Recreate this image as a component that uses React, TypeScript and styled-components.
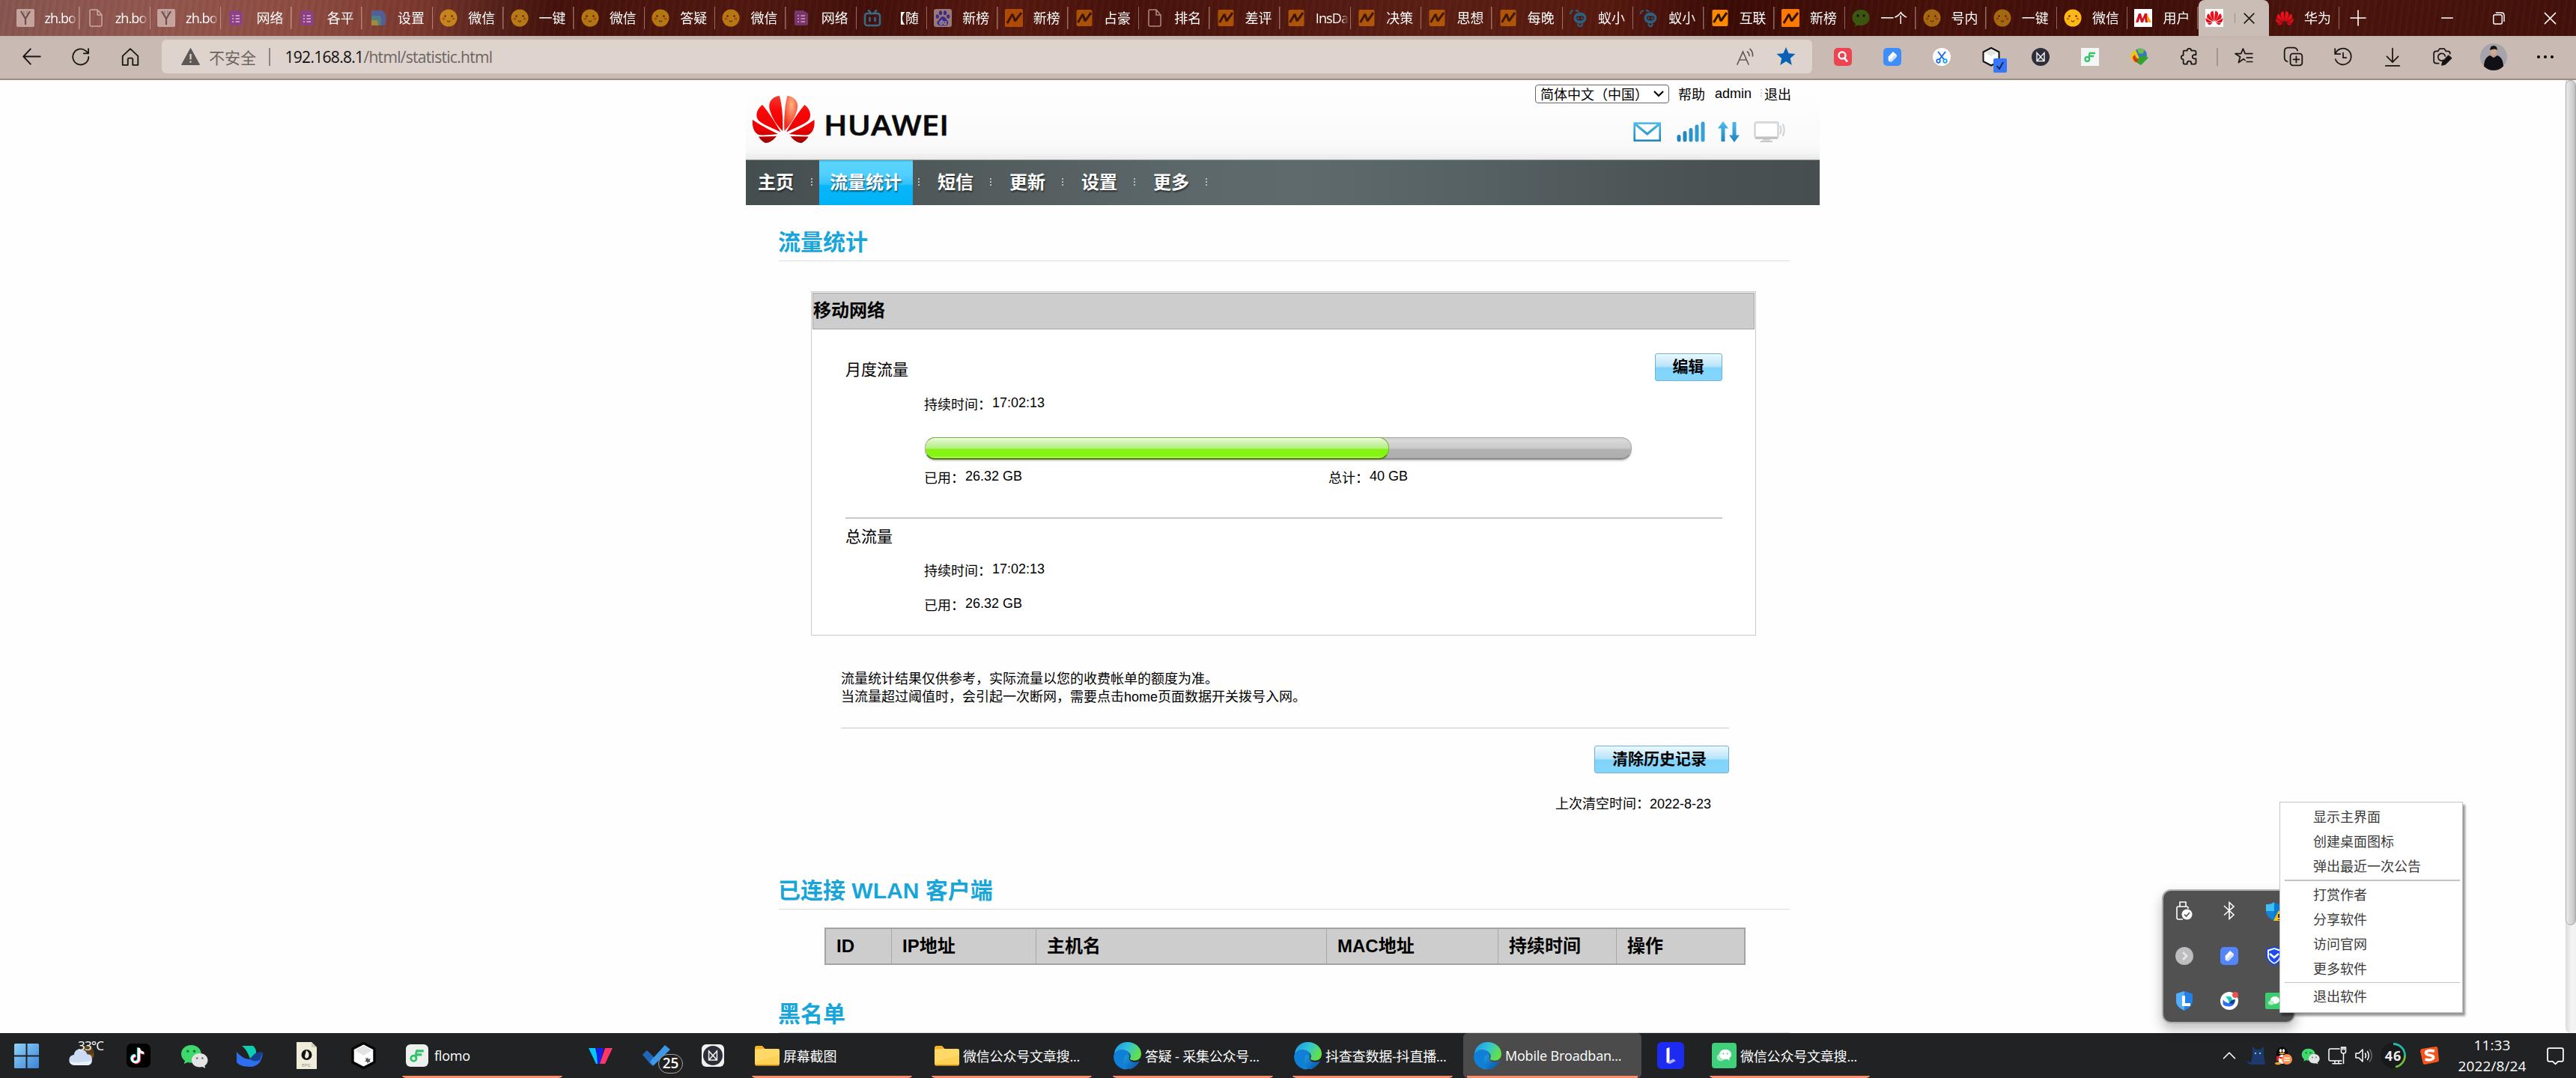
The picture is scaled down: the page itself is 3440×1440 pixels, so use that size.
import React from "react";
import styled, { createGlobalStyle, css } from "styled-components";

const uiFont = `"Open Sans", "Noto Sans CJK SC", sans-serif`;
const pageFont = `"Liberation Sans", "Noto Sans CJK SC", sans-serif`;

const GlobalStyle = createGlobalStyle`
  *, *::before, *::after { box-sizing: border-box; }
  body { margin: 0; background: #fff; overflow: hidden; font-family: ${pageFont}; }
  svg { display: block; flex: none; overflow: visible; }
`;

const Screen = styled.div`
  width: 3440px;
  height: 1440px;
  display: flex;
  flex-direction: column;
  overflow: hidden;
  position: relative;
`;

/* ---------- browser chrome ---------- */

const TabStrip = styled.div`
  height: 48px;
  flex: none;
  display: flex;
  padding-left: 12.5px;
  font: 18px ${uiFont};
  color: #fff;
  background:
    repeating-linear-gradient(98deg, rgba(255, 255, 255, 0.02) 0 2px, rgba(0, 0, 0, 0.035) 3px 6px, transparent 7px 9px),
    linear-gradient(90deg, #885650 0, #93574e 220px, #8e4c42 400px, #7b382e 560px, #56221a 660px, #45120b 740px, #50180f 1000px, #43100a 1160px, #57190f 1350px, #47120b 1500px, #5b1e14 1900px, #56190f 2150px, #3b0b06 2300px, #47110a 2600px, #3f0e08 2850px, #4b140c 3100px, #43110a 3440px);
`;

const TabItem = styled.div<{ $active?: boolean }>`
  width: 94.3px;
  flex: none;
  display: flex;
  align-items: center;
  padding-left: 9px;
  ${(p) =>
    p.$active
      ? css`
          background: #cabdb6;
          border-radius: 8px 8px 0 0;
        `
      : css`
          background: linear-gradient(rgba(255, 225, 215, 0.42), rgba(255, 225, 215, 0.42)) right center / 1.5px 30px no-repeat;
        `}
`;

const TabLabel = styled.span<{ $tight: boolean }>`
  width: 45px;
  margin-left: 14px;
  line-height: 26px;
  overflow: hidden;
  white-space: nowrap;
  letter-spacing: ${(p) => (p.$tight ? -0.9 : 0)}px;
  mask-image: linear-gradient(90deg, #000 72%, transparent 98%);
`;

const Dim = styled.span<{ $o: number }>`
  opacity: ${(p) => p.$o};
`;

const TabDivider = styled.span`
  width: 1px;
  height: 13px;
  margin: 0 9px 0 15px;
  background: #9d908a;
`;

const Slot = styled.div<{ $w: number }>`
  width: ${(p) => p.$w}px;
  flex: none;
  display: flex;
  align-items: center;
  justify-content: center;
`;

const WindowControls = styled.div`
  display: flex;
  margin-left: auto;
`;

const Toolbar = styled.div`
  height: 59px;
  flex: none;
  display: flex;
  align-items: center;
  padding: 0 8px 2px 9px;
  background: linear-gradient(#c5b7af 0, #c9bbb3 8px, #c9bbb3 54px, #c5b7af 57px);
  border-bottom: 2px solid #9b8f87;
`;

const AddressBar = styled.div`
  width: 2204px;
  height: 45px;
  margin: 0 8px 0 9px;
  flex: none;
  display: flex;
  align-items: center;
  padding-left: 26px;
  border-radius: 6px;
  background: #ded3cd;
  font: 21px ${uiFont};
  color: #6c6662;
`;

const Insecure = styled.span`
  width: 64px;
  margin-left: 12px;
  white-space: nowrap;
`;

const AddressDivider = styled.span`
  width: 1.5px;
  height: 24px;
  margin: 0 20px 0 16px;
  background: #8b827d;
`;

const Url = styled.span`
  letter-spacing: -0.7px;
  b { font-weight: 400; color: #111; }
`;

const AddressActions = styled.div`
  display: flex;
  margin: 0 9px 0 auto;
`;

const ToolDivider = styled.i`
  width: 1.5px;
  height: 24px;
  margin: 0 2px 0 4px;
  background: #a3958d;
`;

/* ---------- router page ---------- */

const Viewport = styled.main`
  height: 1273px;
  flex: none;
  display: flex;
  background: #fefefe;
`;

const Scroller = styled.div`
  flex: 1;
  display: flex;
  justify-content: center;
  overflow: hidden;
`;

const ScrollTrack = styled.div`
  width: 14px;
  background: linear-gradient(90deg, #dcdcdc, #f5f5f5 60%, #f0f0f0);
  border-radius: 0 0 7px 7px;
`;

const ScrollThumb = styled.div`
  height: 1129px;
  border-radius: 7px;
  border: 1px solid #a9a9a9;
  background: linear-gradient(90deg, #e9e9e9, #d0d0d0 70%, #bdbdbd);
`;

const PageColumn = styled.div`
  width: 1434px;
  flex: none;
  color: #000;
`;

const Banner = styled.header`
  height: 107px;
  display: flex;
  justify-content: space-between;
  background: linear-gradient(#fff, #fafafa 80%, #f7f7f7 90%, #e9e9e9);
  border-bottom: 1px solid #9fa5a5;
`;

const Brand = styled.div`
  padding: 21px 0 0 9px;
`;

const BannerSide = styled.div`
  width: 380px;
`;

const AccountRow = styled.div`
  height: 24px;
  margin-top: 6px;
  display: flex;
  align-items: center;
  font-size: 18px;
  white-space: nowrap;
`;

const LanguageSelect = styled.div`
  width: 179px;
  height: 25px;
  display: flex;
  align-items: center;
  justify-content: space-between;
  padding: 0 6px 0 6px;
  border: 1px solid #666;
  border-radius: 4px;
  background: #fff;
  margin-right: 12px;
`;

const AccountLink = styled.span<{ $gap: number }>`
  margin-right: ${(p) => p.$gap}px;
`;

const DottedMark = styled.i<{ $color: string; $gap?: number }>`
  width: 2px;
  height: 12px;
  flex: none;
  margin-right: ${(p) => p.$gap ?? 0}px;
  background: repeating-linear-gradient(${(p) => p.$color} 0 2px, transparent 2px 4px);
`;

const StatusRow = styled.div`
  display: flex;
  align-items: center;
  gap: 18.5px;
  margin: 25px 0 0 131px;
  height: 28px;
`;

const NavBar = styled.nav`
  height: 60px;
  display: flex;
  align-items: center;
  background: linear-gradient(90deg, #454e4f, #4d5657 12%, #5d686a 42%, #5e6a6c 52%, #566163 68%, #4a5253 88%, #464e50);
`;

const NavItem = styled.a<{ $active?: boolean; $first?: boolean }>`
  height: 60px;
  padding: ${(p) => (p.$active ? "0 15px 0 14px" : p.$first ? "0 23px 0 16px" : "0 22px 0 24px")};
  margin-left: ${(p) => (p.$active ? 9 : 0)}px;
  margin-right: ${(p) => (p.$active ? 7 : 0)}px;
  font: bold 24px/60px ${pageFont};
  color: #fff;
  text-shadow: 1px 2px 2px rgba(0, 0, 0, 0.55);
  ${(p) =>
    p.$active &&
    css`
      background: linear-gradient(#3fb4dd 0, #5bd5ff 3px, #50cfff 20px, #31c2fb 32px, #08b7fa 34px, #00b2f3);
    `}
`;

const SectionTitle = styled.h2<{ $top: number }>`
  height: 75px;
  margin: ${(p) => p.$top}px 40px 0 44px;
  padding-top: 30px;
  border-bottom: 1px solid #dcdcdc;
  font: bold 30px/40px ${pageFont};
  text-indent: -1px;
  color: #17a5da;
`;

const Panel = styled.section`
  width: 1262px;
  height: 460px;
  margin: 40px 0 0 87px;
  padding: 1px;
  border: 1px solid #c9c9c9;
  background: #fff;
`;

const PanelHead = styled.div`
  height: 49px;
  border: 1px solid #a3a3a3;
  background: #cdcdcd;
  font: bold 24px/46px ${pageFont};
`;

const PanelBody = styled.div`
  padding: 32px 43px 0 44px;
`;

const PanelRow = styled.div`
  display: flex;
  justify-content: space-between;
  height: 38px;
`;

const GroupName = styled.div<{ $top: number }>`
  margin-top: ${(p) => p.$top}px;
  font-size: 21px;
  line-height: 28px;
`;

const GlossButton = styled.button<{ $w: number; $shift?: number }>`
  width: ${(p) => p.$w}px;
  height: 37px;
  padding: 0 ${(p) => p.$shift ?? 1}px 2px 0;
  border: 1.5px solid #6fb0de;
  border-radius: 3px;
  background: linear-gradient(#eef9ff, #b5e2fb 48%, #7fd4fb 52%, #86d6fb);
  font: bold 21px/32px ${pageFont};
  color: #000;
`;

const Detail = styled.div<{ $top: number }>`
  height: 24px;
  margin: ${(p) => p.$top}px 0 0 105px;
  display: grid;
  grid-template-columns: 540px 1fr;
  font-size: 18px;
`;

const Field = styled.div`
  display: flex;
  align-items: flex-start;
  line-height: 24px;
  white-space: nowrap;
`;

const Value = styled.span`
  margin-left: 1px;
  line-height: 19px;
`;

const Meter = styled.div`
  width: 944px;
  height: 30px;
  margin: 31px 0 0 106px;
  border-radius: 14px;
  border: 1px solid #a8a8a8;
  border-bottom: 2px solid #8a8a8a;
  background: linear-gradient(#cfcfcf, #d9d9d9 12%, #c9c9c9 52%, #b3b3b3 56%, #adadad);
  box-shadow: 0 2px 2px rgba(0, 0, 0, 0.18);
`;

const MeterFill = styled.div`
  height: 30px;
  margin: -1px;
  border-radius: 14px;
  border: 1px solid #78b23e;
  border-left-color: #b9b9b9;
  border-bottom: 2px solid #4f7d13;
  background: linear-gradient(#f1fbe8 0, #d8f5bd 15%, #b2ef7f 51%, #86f215 56%, #83f510 88%, #b6f36d);
`;

const PanelRule = styled.div`
  height: 2px;
  margin-top: 40px;
  background: #c9c9c9;
`;

const Notes = styled.div`
  margin: 46px 121px 0 127px;
  padding-bottom: 29px;
  border-bottom: 1px solid #c9c9c9;
  font-size: 18px;
  line-height: 24px;
`;

const ClearArea = styled.div`
  margin: 23px 121px 0 0;
  display: flex;
  flex-direction: column;
  align-items: flex-end;
  font-size: 18px;
`;

const ClearTime = styled.div`
  margin: 30px 24px 0 0;
  height: 24px;
  line-height: 23px;
`;

const ClientTable = styled.div`
  width: 1230px;
  height: 50px;
  margin: 24px 0 0 105px;
  display: grid;
  grid-template-columns: 87px 193px 388px 229px 158px 1fr;
  border: 2px solid #a3a3a3;
  background: #cdcdcd;
  font: bold 24px/45px ${pageFont};
`;

const HeadCell = styled.div`
  padding-left: 14px;
  & + & { border-left: 1px solid #a8a8a8; padding-left: 14px; }
`;

/* ---------- tray flyout and context menu ---------- */

const TrayFlyout = styled.div`
  position: absolute;
  left: 2887px;
  top: 1188px;
  width: 178px;
  height: 179px;
  padding: 0 0 2px 2px;
  display: grid;
  grid-template-columns: repeat(3, 60px);
  grid-template-rows: repeat(3, 60px);
  align-content: center;
  justify-content: center;
  place-items: center;
  background: #515151;
  border: 2px solid #adadad;
  border-radius: 12px;
  box-shadow: 0 8px 16px rgba(0, 0, 0, 0.25);
`;

const ContextMenu = styled.div`
  position: absolute;
  left: 3044px;
  top: 1071px;
  width: 245px;
  height: 282px;
  padding: 2px 3px 0 6px;
  background: #fff;
  border: 1.5px solid #c4c4c4;
  box-shadow: 3px 4px 3px rgba(0, 0, 0, 0.42);
  font: 18px/33px "Noto Sans CJK SC", sans-serif;
  color: #3a3a3a;
`;

const MenuItem = styled.div`
  height: 33px;
  padding-left: 38px;
`;

const MenuRule = styled.div`
  height: 1.5px;
  margin: 2px 0 1px;
  background: #c2c2c2;
`;

/* ---------- taskbar ---------- */

const Taskbar = styled.footer`
  height: 60px;
  flex: none;
  display: flex;
  align-items: stretch;
  background: #212224;
  font: 18px ${uiFont};
  color: #fff;
  white-space: nowrap;
`;

const Pinned = styled.div<{ $w: number; $gap: number }>`
  width: ${(p) => p.$w}px;
  margin-left: ${(p) => p.$gap}px;
  flex: none;
  display: flex;
  align-items: center;
  position: relative;
`;

const Running = styled.div<{ $w: number; $gap: number; $active?: boolean; $pad?: number }>`
  width: ${(p) => p.$w}px;
  margin-left: ${(p) => p.$gap}px;
  padding-left: ${(p) => p.$pad ?? 5}px;
  flex: none;
  display: flex;
  align-items: center;
  gap: ${(p) => (p.$pad === 6 ? 8 : 5)}px;
  letter-spacing: -0.2px;
  border-radius: 6px;
  background:
    linear-gradient(#fb8b6b, #fb8b6b) center bottom / calc(100% - ${(p) => (p.$active ? 10 : 0)}px) 3px no-repeat,
    ${(p) => (p.$active ? "#4b4b4c" : "transparent")};
`;

const Temperature = styled.span`
  position: absolute;
  left: 12px;
  top: 5px;
  font-size: 17px;
  letter-spacing: -0.8px;
`;

const CountBadge = styled.span`
  position: absolute;
  left: 21px;
  top: 28px;
  width: 33px;
  height: 26px;
  border: 1.5px solid #a5a5a5;
  border-radius: 13px;
  background: #202020;
  font: 600 19px/22px ${uiFont};
  text-align: center;
`;

const Tray = styled.div`
  display: flex;
  margin-left: auto;
`;

const Clock = styled.div`
  width: 112px;
  padding-top: 2px;
  text-align: center;
  font-size: 19px;
  letter-spacing: 0.1px;
  line-height: 28px;
`;

/* ---------- drawings ---------- */

type IconProps = { s?: number; w?: number; c?: string };

const Line: React.FC<{ s?: number; c?: string; sw?: number; children: React.ReactNode }> = ({ s = 24, c = "#1b1715", sw = 1.6, children }) => (
  <svg width={s} height={s} viewBox="0 0 24 24" fill="none" stroke={c} strokeWidth={sw} strokeLinecap="round" strokeLinejoin="round">
    {children}
  </svg>
);

const halfPetals = [
  "M36 0C26 1 19 9 24 22C26.500 31 34 41 40 47C41 33 39.500 12 36 0Z",
  "M13 12C5 18 3 28 8.500 33.500C14 38.500 27 43 37.500 48.500C31 37 21 21 13 12Z",
  "M0 32C-1 43 3 50 8 52C14 53.200 24 52 34 51C25 46.500 12 40.500 0 32Z",
  "M8 54.500L32 54C27 60 22 63 17 63C13 61 10 58 8 54.500Z",
];

const HuaweiFlower: React.FC<{ w: number; h?: number; id: string; flat?: boolean }> = ({ w, h, id, flat }) => (
  <svg width={w} height={h ?? (w * 64) / 83} viewBox="0 0 83 64" preserveAspectRatio="none">
    <defs>
      <linearGradient id={id} x1="0" y1="0" x2="0" y2="64" gradientUnits="userSpaceOnUse">
        <stop offset="0" stopColor={flat ? "#ef1620" : "#f33b33"} />
        <stop offset=".3" stopColor={flat ? "#e8101c" : "#fa0808"} />
        <stop offset=".7" stopColor={flat ? "#e00c18" : "#ee0000"} />
        <stop offset="1" stopColor={flat ? "#d60814" : "#8e0000"} />
      </linearGradient>
      <radialGradient id={id + "h"} cx=".45" cy=".25" r=".7">
        <stop offset="0" stopColor="#ffb482" />
        <stop offset="1" stopColor="#f52a1d" />
      </radialGradient>
    </defs>
    {halfPetals.map((d) => (
      <path key={d} d={d} fill={`url(#${id})`} />
    ))}
    <g transform="translate(82.5 0) scale(-1 1)">
      {halfPetals.map((d, i) => (
        <path key={d} d={d} fill={i === 0 && !flat ? `url(#${id}h)` : `url(#${id})`} />
      ))}
    </g>
  </svg>
);

const HuaweiLogo = () => (
  <svg width="262" height="64" viewBox="0 0 262 64">
    <HuaweiFlower w={83} h={64} id="brand" />
    <text x="95" y="52.500" fontFamily="Open Sans, sans-serif" fontWeight="600" fontSize="38.500" textLength="167" lengthAdjust="spacingAndGlyphs" fill="#0a0a0a" stroke="#0a0a0a" strokeWidth=".6">
      HUAWEI
    </text>
  </svg>
);

const WeChat: React.FC<{ s: number }> = ({ s }) => (
  <svg width={s} height={s} viewBox="0 0 36 36">
    <path d="M14 4C6.500 4 1 9 1 15.500C1 19.200 3 22.300 5.800 24.300L4.600 28.500L9.300 26.200C10.800 26.700 12.400 26.900 14 26.900C21.400 26.900 27 22 27 15.500S21.400 4 14 4Z" fill="#3fd86d" />
    <path d="M25 14.500C18.900 14.500 14.500 18.500 14.500 23.500S18.900 32.500 25 32.500C26.300 32.500 27.500 32.300 28.600 32L32.300 34L31.400 30.600C33.900 29 35.500 26.400 35.500 23.500C35.500 18.500 31.100 14.500 25 14.500Z" fill="#e4e4e4" />
    <circle cx="9.500" cy="12" r="1.700" fill="#157a37" />
    <circle cx="18" cy="12" r="1.700" fill="#157a37" />
    <circle cx="21.500" cy="21" r="1.400" fill="#777" />
    <circle cx="28.500" cy="21" r="1.400" fill="#777" />
  </svg>
);

const Flomo: React.FC<{ s: number; bg: string; r?: number }> = ({ s, bg, r = 0 }) => (
  <svg width={s} height={s} viewBox="0 0 24 24">
    <rect width="24" height="24" rx={r} fill={bg} />
    <path d="M11 7H19M10 11H17" stroke="#31c36a" strokeWidth="2.600" />
    <path d="M12 6.500C10.500 8 10.800 10 10.800 14.500" stroke="#31c36a" strokeWidth="2.200" fill="none" />
    <circle cx="8.300" cy="15" r="2.900" fill="none" stroke="#31c36a" strokeWidth="2.200" />
  </svg>
);

const Feather: React.FC<IconProps & { bg?: string }> = ({ s = 24, bg = "#3d8dfb" }) => (
  <svg width={s} height={s} viewBox="0 0 24 24">
    <rect width="24" height="24" rx="5" fill={bg} />
    <path d="M7 18L6.500 12L13 5L18 9.500L17.500 12L11 18.500Z" fill="#fff" />
    <path d="M7 18L11 18.500L17.500 12L15 9Z" fill="#cfe0ff" />
  </svg>
);

const Bird: React.FC<{ s: number }> = ({ s }) => (
  <svg width={s} height={s} viewBox="0 0 36 36">
    <path d="M7 5H22C26 9 27 13 25 16L18 22C15 14 12 9 7 5Z" fill="#0cceb1" />
    <path d="M0 13C6 20 12 23 18 23C22 18 28 13 35 14C34 25 29 33 18 33C8 33 2 30 0 27Z" fill="#2e6ff2" />
    <path d="M18 23C22 16 28 12 35 14L31 24C27 26 22 26 18 23Z" fill="#14408f" />
  </svg>
);

const Hexagon: React.FC<{ w: number }> = ({ w }) => (
  <svg width={w} height={w * 1.09} viewBox="0 0 33 36">
    <path d="M16.500 1.500L31 9V27L16.500 34.500L2 27V9Z" fill="#fff" stroke="#050505" strokeWidth="3.400" strokeLinejoin="round" />
    <path d="M16.500 5L28 11L16.500 18L5 11Z" fill="#e3e3e3" />
    <path d="M22 20L23 23L26 22L24.500 25L26 27L23 26.500L22 29L21 26L18 26L20 24L19 21L21.500 22Z" fill="#555" />
  </svg>
);

const MyMind: React.FC<{ s: number }> = ({ s }) => (
  <svg width={s} height={s} viewBox="0 0 24 24">
    <circle cx="12" cy="12" r="12" fill="#2e2e39" />
    <path d="M7 17.500V6.500L12 12L17 6.500V17.500ZM7 17.500L12 12L17 17.500" fill="none" stroke="#f2f2f5" strokeWidth="1.400" />
  </svg>
);

const Folder = () => (
  <svg width="33" height="27" viewBox="0 0 33 27">
    <path d="M0 2.500Q0 0 2.500 0H10L13.500 4V8H0Z" fill="#f6b21c" />
    <rect y="4" width="33" height="22" rx="2" fill="#ffd968" />
    <path d="M0 22L33 12V24Q33 26 31 26H2Q0 26 0 24Z" fill="#fbcb48" opacity=".6" />
    <path d="M1 26H32" stroke="#d99a16" strokeWidth="1.500" />
  </svg>
);

const Edge: React.FC<{ id: string }> = ({ id }) => (
  <svg width="37" height="37" viewBox="0 0 36 36">
    <defs>
      <linearGradient id={id + "a"} x1="0" y1="0" x2="1" y2=".4">
        <stop offset="0" stopColor="#1f8fe0" />
        <stop offset=".5" stopColor="#2fc0dd" />
        <stop offset="1" stopColor="#62e04c" />
      </linearGradient>
      <linearGradient id={id + "b"} x1="0" y1="0" x2="1" y2="1">
        <stop offset="0" stopColor="#1b9de2" />
        <stop offset="1" stopColor="#0c50a6" />
      </linearGradient>
    </defs>
    <path d="M1 15C2 6 9 0 18 0C28 0 36 7 36 15C36 21 32 24 27 24C23 24 20.500 22.500 21.500 21C24 17 20 11 13 11C7 11 3 13 1 17Z" fill={`url(#${id}a)`} />
    <path d="M0 18C2 12 7 9 13 10C19 11 22 15 21 19C20 16 15 16 13.500 20C11 27 18 33 27 31C22 35 15 37 10 34C3 31 0 25 0 18Z" fill="#0f7fd8" />
    <path d="M13.500 20C15 16 19 15.500 21 19C19 21 21 25 26 26C30 26.500 32 25 34 24C32 29 28 33 22 35.500C14 34 11 27 13.500 20Z" fill={`url(#${id}b)`} />
  </svg>
);

const Shield: React.FC<{ kind: "defender" | "tencent" | "lenovo" }> = ({ kind }) => (
  <svg width="24" height="26" viewBox="0 0 24 26">
    {kind === "defender" && (
      <>
        <path d="M12 1C9 3.500 5 4 1 4V13H12Z" fill="#3cc0f5" />
        <path d="M12 13H1C1 19 6 23 12 26Z" fill="#1583d6" />
        <path d="M12 1C15 3.500 19 4 23 4V13C23 19 18 23 12 26Z" fill="#0c78cf" />
        <path d="M18 12L26 26H11Z" fill="#fdc111" />
        <path d="M18 17V22M18 24V25" stroke="#222" strokeWidth="1.800" />
      </>
    )}
    {kind === "tencent" && (
      <>
        <path d="M12 1L22 4V13C22 19 18 22 12 25C6 22 2 19 2 13V4Z" fill="#fff" stroke="#1c48dd" strokeWidth="2" />
        <path d="M12 4L19 6.500V13C19 17 16 20 12 22C8 20 5 17 5 13V6.500Z" fill="#1e4bf0" />
        <path d="M6 10L12 15L18 10" stroke="#fff" strokeWidth="2.600" fill="none" />
      </>
    )}
    {kind === "lenovo" && (
      <>
        <path d="M12 0L23 3.500V13C23 19 18 23 12 26C6 23 1 19 1 13V3.500Z" fill="#2280e8" />
        <path d="M12 0L1 3.500V13C1 19 6 23 12 26Z" fill="#55aef8" />
        <path d="M11 6V18H20" stroke="#fff" strokeWidth="4" fill="none" />
      </>
    )}
  </svg>
);

const tabIcons: Record<string, React.ReactNode> = {
  v: (
    <svg width="24" height="24" viewBox="0 0 24 24">
      <rect width="24" height="24" rx="2" fill="#d5b6b1" opacity=".8" />
      <path d="M6 3L12 13L18 3M12 12V21" stroke="#6d504c" strokeWidth="2.200" fill="none" />
      <path d="M10 2V8M14 2V8" stroke="#8d706b" />
    </svg>
  ),
  doc: (
    <svg width="24" height="24" viewBox="0 0 24 24" fill="none" stroke="#d9bfba" strokeWidth="1.500" strokeLinejoin="round" opacity=".8">
      <path d="M5 1H14L20 8V21Q20 23 18 23H6Q4 23 4 21V2ZM14 1V8H20" />
    </svg>
  ),
  form: (
    <svg width="24" height="24" viewBox="0 0 24 24">
      <path d="M4 2H14L20 6V19Q20 22 17 22H4Q2 22 2 20V4Q2 2 4 2Z" fill="#8b418f" opacity=".85" />
      <path d="M6 9H8M6 13H8M6 17H8M10.500 9H16M10.500 13H16M10.500 17H16" stroke="#c99bc6" strokeWidth="1.800" />
    </svg>
  ),
  multi: (
    <svg width="24" height="24" viewBox="0 0 24 24" opacity=".8">
      <path d="M3 2H17L22 7V18Q22 22 18 22H3Z" fill="#4a66ad" />
      <path d="M3 9H12Q16 9 16 13V22H3Z" fill="#3d9196" />
      <path d="M3 15H9Q12 15 12 18V22H3Z" fill="#ae9b3e" />
    </svg>
  ),
  face: (
    <svg width="24" height="24" viewBox="0 0 24 24">
      <circle cx="12" cy="12" r="11.500" fill="#fdb813" />
      <circle cx="7.500" cy="9.500" r="1.200" fill="#3b2508" />
      <circle cx="16.500" cy="9.500" r="1.200" fill="#3b2508" />
      <ellipse cx="5.500" cy="13" rx="2" ry="1.500" fill="#e8622c" />
      <ellipse cx="18.500" cy="13" rx="2" ry="1.500" fill="#e8622c" />
      <path d="M10 15.500Q12 18.500 14 15.500" stroke="#3b2508" strokeWidth="1.200" fill="none" />
    </svg>
  ),
  bili: (
    <svg width="24" height="24" viewBox="0 0 24 24" fill="none" stroke="#376a88" strokeWidth="2.600">
      <rect x="2" y="6" width="20" height="16" rx="3" />
      <path d="M7 2L10 6M17 2L14 6M8.500 12V16M15.500 12V16" strokeLinecap="round" />
    </svg>
  ),
  baidu: (
    <svg width="24" height="24" viewBox="0 0 24 24">
      <rect width="24" height="24" rx="3" fill="#9a7a78" />
      <g fill="#3d2a86">
        <ellipse cx="4.800" cy="10" rx="2.100" ry="2.800" />
        <ellipse cx="9" cy="5.200" rx="2.100" ry="2.900" />
        <ellipse cx="15" cy="5.200" rx="2.100" ry="2.900" />
        <ellipse cx="19.200" cy="10" rx="2.100" ry="2.800" />
        <path d="M12 10C9 10 8 14 5.500 16S5 22 8 22H16C19 22 20 18 18.500 16S15 10 12 10Z" />
      </g>
      <text x="7" y="20.500" fontSize="8" fontFamily="Open Sans, sans-serif" fontWeight="700" fill="#b79f9e">du</text>
    </svg>
  ),
  n: (
    <svg width="24" height="24" viewBox="0 0 24 24">
      <rect x="1.500" y="1" width="21" height="22" rx="2" fill="#ff8a00" />
      <path d="M3.500 18L10 7L13 16L21 5" fill="none" stroke="#2e1205" strokeWidth="3" strokeLinejoin="bevel" />
    </svg>
  ),
  nbig: (
    <svg width="24" height="24" viewBox="0 0 24 24">
      <rect width="24" height="24" rx="1.500" fill="#ff7800" />
      <path d="M3 19L10 7L13.500 16L22 5" fill="none" stroke="#2e1205" strokeWidth="3" strokeLinejoin="bevel" />
    </svg>
  ),
  ant: (
    <svg width="24" height="24" viewBox="0 0 24 24" fill="none" stroke="#2e5f80" strokeWidth="2">
      <path d="M1 7Q1 2 5 2.500M8 3Q10 .500 12 4" />
      <ellipse cx="14" cy="12" rx="8.500" ry="7.500" fill="#2e5f80" stroke="none" />
      <path d="M8.500 12Q9 8.500 14 9.500Q19 8.500 19.500 12Q18 15.500 14 15.500T8.500 12Z" fill="#4a1a15" stroke="none" />
      <circle cx="11.500" cy="12.300" r="1.200" fill="#2e5f80" stroke="none" />
      <circle cx="16.500" cy="12.300" r="1.200" fill="#2e5f80" stroke="none" />
      <path d="M11 19.500L12.500 23H15.500L17 19.500" />
    </svg>
  ),
  wx: (
    <svg width="24" height="24" viewBox="0 0 24 24">
      <path d="M12 1C5 1 .500 5.500 .500 11.500C.500 15 2 18 5 20L4 23.500L8.500 21.500Q10 22 12 22C19 22 23.500 17.500 23.500 11.500S19 1 12 1Z" fill="#3a5610" />
      <circle cx="8" cy="9" r="1.700" fill="#230d06" />
      <circle cx="16" cy="9" r="1.700" fill="#230d06" />
    </svg>
  ),
  m: (
    <svg width="24" height="24" viewBox="0 0 24 24">
      <rect width="24" height="24" fill="#fff" />
      <path d="M2 18L6 6H9L11 13L14 6H17L18 18H15L14 12L12 18H9L7.500 12L5.500 18Z" fill="#d3121f" />
      <path d="M17 6L23 18H19L17 13Z" fill="#f4a914" />
    </svg>
  ),
  hw: <HuaweiFlower w={24} h={19} id="tabflower" flat />,
  hwbox: (
    <svg width="24" height="24" viewBox="0 0 24 24">
      <rect width="24" height="24" fill="#fff" />
      <g transform="translate(.5 2.500)">
        <HuaweiFlower w={23} h={19} id="activeflower" flat />
      </g>
    </svg>
  ),
};

const tabs: [string, string, number][] = [
  ["v", "zh.bo", 1], ["doc", "zh.bo", 1], ["v", "zh.bo", 1], ["form", "网络", 1], ["form", "各平", 1], ["multi", "设置", 1],
  ["face", "微信", 0.62], ["face", "一键", 0.6], ["face", "微信", 0.6], ["face", "答疑", 0.6], ["face", "微信", 0.6],
  ["form", "网络", 0.85], ["bili", "【随", 1], ["baidu", "新榜", 1], ["nbig", "新榜", 0.52], ["n", "占豪", 0.52], ["doc", "排名", 0.85],
  ["n", "差评", 0.52], ["n", "InsDa", 0.52], ["n", "决策", 0.52], ["n", "思想", 0.52], ["n", "每晚", 0.52], ["ant", "蚁小", 1],
  ["ant", "蚁小", 1], ["n", "互联", 1], ["nbig", "新榜", 1], ["wx", "一个", 1], ["face", "号内", 0.52], ["face", "一键", 0.52],
  ["face", "微信", 1], ["m", "用户", 1], ["hwbox", "", 1], ["hw", "华为", 1],
];

const Chevron = ({ c = "#000", w = 14 }: IconProps) => (
  <svg width={w} height={w * 0.6} viewBox="0 0 14 8.400" fill="none" stroke={c} strokeWidth="2.200">
    <path d="M1 1L7 7L13 1" />
  </svg>
);

const ExtensionIcons = () => (
  <>
    <Slot $w={66}>
      <svg width="24" height="24" viewBox="0 0 24 24">
        <rect width="24" height="24" rx="5" fill="#ee4350" />
        <circle cx="11" cy="10" r="4.500" fill="none" stroke="#fff" strokeWidth="2.400" />
        <path d="M14 13.500L18 18.500" stroke="#fff" strokeWidth="2.800" />
      </svg>
    </Slot>
    <Slot $w={66}><Feather /></Slot>
    <Slot $w={66}>
      <svg width="24" height="24" viewBox="0 0 24 24">
        <circle cx="12" cy="12" r="12" fill="#fff" />
        <path d="M7 5L15.500 16M17 5L8.500 16" stroke="#1a6df0" strokeWidth="2" />
        <circle cx="7.500" cy="17.500" r="2.300" fill="none" stroke="#1a6df0" strokeWidth="1.700" />
        <circle cx="16.500" cy="17.500" r="2.300" fill="none" stroke="#16a1f0" strokeWidth="1.700" />
      </svg>
    </Slot>
    <Slot $w={66}>
      <svg width="26" height="26" viewBox="0 0 26 26">
        <path d="M13 1L23.500 6.500V19L13 24.500L2.500 19V6.500Z" fill="#fff" stroke="#111" strokeWidth="2" strokeLinejoin="round" />
        <path d="M13 3.500L21 7.500L13 12L5 7.500Z" fill="#e4e4e4" />
        <rect x="16" y="15" width="18" height="19" rx="2" fill="#3577f6" />
        <path d="M20.500 25L24 29L29 20" fill="none" stroke="#10204a" strokeWidth="1.800" />
      </svg>
    </Slot>
    <Slot $w={66}><MyMind s={24} /></Slot>
    <Slot $w={66}><Flomo s={24} bg="#f4f6f4" /></Slot>
    <Slot $w={66}>
      <svg width="26" height="24" viewBox="0 0 26 24">
        <circle cx="14" cy="9.500" r="9" fill="#3479c0" />
        <path d="M10 2Q15 -1 20 3L17 8L12 7Z" fill="#6ebf46" />
        <path d="M1 12Q2 4 8 3L13 14L9 20Q2 18 1 12Z" fill="#edc51b" />
        <path d="M4 12Q4 19 12 20L14 15Q8 15 7 9Z" fill="#d13a1d" />
        <path d="M12 13L19 10L25 13L15 23L10 20Z" fill="#2fa32b" />
      </svg>
    </Slot>
    <Slot $w={66}>
      <Line s={27}>
        <path d="M6 5H9.500A2.500 2.500 0 1 1 14.500 5H18Q20 5 20 7V10H18.500A2.300 2.300 0 1 0 18.500 14.500H20V19Q20 21 18 21H14.500V20A2.500 2.500 0 1 0 9.500 20V21H7Q5 21 5 19V15.500A2.500 2.500 0 1 1 5 10.500V7Q5 5 6 5Z" />
      </Line>
    </Slot>
  </>
);

const Browser = () => (
  <>
    <TabStrip>
      {tabs.map(([icon, label, o], i) => (
        <TabItem key={i} $active={icon === "hwbox"}>
          <Dim $o={o}>{tabIcons[icon]}</Dim>
          {label ? (
            <TabLabel $tight={label.length > 2}>{label}</TabLabel>
          ) : (
            <>
              <TabDivider />
              <Line s={19} sw={2}><path d="M4 4L20 20M20 4L4 20" /></Line>
            </>
          )}
        </TabItem>
      ))}
      <Slot $w={50}><Line s={24} c="#fff"><path d="M12 2V22M2 12H22" /></Line></Slot>
      <WindowControls>
        <Slot $w={69}><Line s={16} c="#fff" sw={2}><path d="M1 12H23" /></Line></Slot>
        <Slot $w={69}>
          <Line s={19} c="#fff" sw={1.8}>
            <rect x="3.500" y="6" width="14.500" height="15.500" rx="2.500" />
            <path d="M8 2.500H17Q21.500 2.500 21.500 7V17" />
          </Line>
        </Slot>
        <Slot $w={69}><Line s={19} c="#fff" sw={1.8}><path d="M3 3L21 21M21 3L3 21" /></Line></Slot>
      </WindowControls>
    </TabStrip>
    <Toolbar>
      <Slot $w={66}><Line s={27} sw={1.7}><path d="M22 12H2.500M10.500 3L2 12L10.500 21" /></Line></Slot>
      <Slot $w={66}><Line s={26} sw={1.7}><path d="M21.500 12A9.700 9.700 0 1 1 18 4.500L21 7.500M21.300 2V7.800H15.500" /></Line></Slot>
      <Slot $w={66}><Line s={26} sw={1.7}><path d="M2.500 11L12 2L21.500 11V22H15V15Q15 13.500 13.500 13.500H10.500Q9 13.500 9 15V22H2.500Z" /></Line></Slot>
      <AddressBar>
        <svg width="25" height="23" viewBox="0 0 25 23">
          <path d="M12.500 0.500L24.500 22.500H0.500Z" fill="#5d5855" stroke="#5d5855" strokeLinejoin="round" />
          <path d="M12.500 8V15.500M12.500 17.500V19.800" stroke="#ded3cd" strokeWidth="2.200" />
        </svg>
        <Insecure>不安全</Insecure>
        <AddressDivider />
        <Url><b>192.168.8.1</b>/html/statistic.html</Url>
        <AddressActions>
          <Slot $w={53}>
            <svg width="25" height="24" viewBox="0 0 25 24" fill="none" stroke="#625c58" strokeWidth="1.700" strokeLinecap="round">
              <path d="M1 22L8.500 5L16 22M3.700 16H13.300M14.500 5Q17 7 17 10.500M18 1.500Q22 5 21.500 11" />
            </svg>
          </Slot>
          <Slot $w={53}>
            <svg width="26" height="25" viewBox="0 0 24 23"><path d="M12 0L15.300 7.600L23.500 8.300L17.300 13.700L19.200 22L12 17.600L4.800 22L6.700 13.700L.500 8.300L8.700 7.600Z" fill="#0861b4" /></svg>
          </Slot>
        </AddressActions>
      </AddressBar>
      <ExtensionIcons />
      <ToolDivider />
      <Slot $w={66}><Line s={26}><path d="M13 16L11 14.500L5 19L7 12L1 8H8L10.500 2L13 8H22M15 13H22M15 18H22" /></Line></Slot>
      <Slot $w={66}><Line s={27}><rect x="8.500" y="8.500" width="14" height="14" rx="3" /><path d="M15.500 12V19M12 15.500H19M5 18Q1.500 17 1.500 13V6Q1.500 1.500 6 1.500H12Q16 1.500 17 5" /></Line></Slot>
      <Slot $w={66}><Line s={26}><path d="M2 2V8.500H8.500M2.500 8A10 10 0 1 1 2.500 15M12 7V13H16" /></Line></Slot>
      <Slot $w={66}><Line s={26}><path d="M12 1.500V18M5 11.500L12 18.500L19 11.500M3.500 23H20.500" /></Line></Slot>
      <Slot $w={66}>
        <Line s={26}>
          <path d="M8 20H5Q2 20 2 17V8Q2 5 5 5H7L9 2H15L17 5H19Q22 5 22 8M14 16A4.500 4.500 0 1 1 16 11" />
          <path d="M12 22L13 18L20 10.500L23.500 13.500L16 21Z" fill="#111" />
        </Line>
      </Slot>
      <Slot $w={72}>
        <svg width="36" height="36" viewBox="0 0 36 36">
          <clipPath id="avatar"><circle cx="18" cy="18" r="18" /></clipPath>
          <g clipPath="url(#avatar)">
            <rect width="36" height="36" fill="#a4a4aa" />
            <path d="M5 36Q4 19 13 16L18 19L23 16Q32 19 31 36Z" fill="#111115" />
            <path d="M15.500 13H20.500V17L18 19L15.500 17Z" fill="#c2967e" />
            <ellipse cx="18" cy="10.500" rx="4.200" ry="5.500" fill="#d2a78e" />
            <path d="M13.300 9Q13 3 18 3T22.700 9Q20 6 13.300 9Z" fill="#15110f" />
          </g>
        </svg>
      </Slot>
      <Slot $w={66}>
        <svg width="22" height="4" viewBox="0 0 22 4"><circle cx="2" cy="2" r="2" /><circle cx="11" cy="2" r="2" /><circle cx="20" cy="2" r="2" /></svg>
      </Slot>
    </Toolbar>
  </>
);

const StatusIcons = () => (
  <StatusRow>
    <svg width="38" height="28" viewBox="0 0 38 28">
      <defs>
        <linearGradient id="ink" x1="0" y1="0" x2="0" y2="28" gradientUnits="userSpaceOnUse">
          <stop offset="0" stopColor="#51bdec" />
          <stop offset="1" stopColor="#1e83bd" />
        </linearGradient>
      </defs>
      <rect x="1.700" y="2.700" width="34" height="23" fill="#fff" stroke="url(#ink)" strokeWidth="2.600" />
      <path d="M3 4L18.700 17L34.500 4" fill="none" stroke="url(#ink)" strokeWidth="3.200" />
    </svg>
    <svg width="38" height="28" viewBox="0 0 38 28" strokeWidth="5" strokeLinecap="round">
      {[20.5, 15.5, 11.5, 7, 3].map((y, i) => (
        <path key={y} d={`M${4 + i * 8} ${y}L${4.01 + i * 8} 25`} stroke={["#1f85bf", "#2387c0", "#2a91ca", "#309ad3", "#36a0d9"][i]} />
      ))}
    </svg>
    <svg width="29" height="28" viewBox="0 0 29 28">
      <path d="M7 0L14 9.500H9.500V27H4.500V9.500H0ZM22 28L15 18.500H19.500V1H24.500V18.500H29Z" fill="url(#ink)" />
    </svg>
    <svg width="44" height="28" viewBox="0 0 44 28">
      <rect x="1.500" y="1.500" width="31" height="20" rx="2" fill="#fff" stroke="#d7dadc" strokeWidth="2.800" />
      <path d="M2 22.500H32" stroke="#b9bbbd" strokeWidth="2.400" />
      <path d="M12 24.500H22M9 27H25" stroke="#c8c8c8" strokeWidth="2" />
      <path d="M35 6Q38 11 35 17M38.500 3.500Q43 11 38.500 20" fill="none" stroke="#d2d5d7" strokeWidth="2.200" />
    </svg>
  </StatusRow>
);

const navItems = ["主页", "流量统计", "短信", "更新", "设置", "更多"];

const RouterPage = () => (
  <PageColumn>
    <Banner>
      <Brand><HuaweiLogo /></Brand>
      <BannerSide>
        <AccountRow>
          <LanguageSelect><span>简体中文（中国）</span><Chevron /></LanguageSelect>
          <AccountLink $gap={13}>帮助</AccountLink>
          <AccountLink $gap={12}>admin</AccountLink>
          <DottedMark $color="#d5d5d5" $gap={3} />
          <AccountLink $gap={0}>退出</AccountLink>
        </AccountRow>
        <StatusIcons />
      </BannerSide>
    </Banner>
    <NavBar>
      {navItems.map((n, i) => (
        <React.Fragment key={n}>
          <NavItem $active={i === 1} $first={i === 0}>{n}</NavItem>
          <DottedMark $color="#b9bfc0" />
        </React.Fragment>
      ))}
    </NavBar>
    <SectionTitle $top={0}>流量统计</SectionTitle>
    <Panel>
      <PanelHead>移动网络</PanelHead>
      <PanelBody>
        <PanelRow>
          <GroupName $top={8}>月度流量</GroupName>
          <GlossButton $w={90}>编辑</GlossButton>
        </PanelRow>
        <Detail $top={19}><Field>持续时间：<Value>17:02:13</Value></Field></Detail>
        <Meter><MeterFill style={{ width: `${(26.32 / 40) * 943}px` }} /></Meter>
        <Detail $top={13}>
          <Field>已用：<Value>26.32 GB</Value></Field>
          <Field>总计：<Value>40 GB</Value></Field>
        </Detail>
        <PanelRule />
        <GroupName $top={10}>总流量</GroupName>
        <Detail $top={20}><Field>持续时间：<Value>17:02:13</Value></Field></Detail>
        <Detail $top={22}><Field>已用：<Value>26.32 GB</Value></Field></Detail>
      </PanelBody>
    </Panel>
    <Notes>
      流量统计结果仅供参考，实际流量以您的收费帐单的额度为准。<br />
      当流量超过阈值时，会引起一次断网，需要点击home页面数据开关拨号入网。
    </Notes>
    <ClearArea>
      <GlossButton $w={180} $shift={6}>清除历史记录</GlossButton>
      <ClearTime>上次清空时间：2022-8-23</ClearTime>
    </ClearArea>
    <SectionTitle $top={53}>已连接 WLAN 客户端</SectionTitle>
    <ClientTable>
      {["ID", "IP地址", "主机名", "MAC地址", "持续时间", "操作"].map((h) => <HeadCell key={h}>{h}</HeadCell>)}
    </ClientTable>
    <SectionTitle $top={16}>黑名单</SectionTitle>
  </PageColumn>
);

const TaskbarIcons = () => (
  <>
    <Pinned $w={33} $gap={19}>
      <svg width="33" height="33" viewBox="0 0 33 33">
        <defs><linearGradient id="win" x1="0" y1="0" x2="1" y2="1"><stop offset="0" stopColor="#8fd3f8" /><stop offset="1" stopColor="#3d83d8" /></linearGradient></defs>
        <path d="M0 1.500Q0 0 1.500 0H15.500V15.500H0ZM17.500 0H31.500Q33 0 33 1.500V15.500H17.500ZM0 17.500H15.500V33H1.500Q0 33 0 31.500ZM17.500 17.500H33V31.500Q33 33 31.500 33H17.500Z" fill="url(#win)" />
      </svg>
    </Pinned>
    <Pinned $w={46} $gap={40}>
      <svg width="36" height="28" viewBox="0 0 38 30">
        <circle cx="25" cy="12" r="11" fill="#7a4d1b" />
        <path d="M8 29Q0 28 0 21.500T7 14Q8 6 16 6T26 13Q33 13 33 21T26 29Z" fill="#cbdcf2" />
        <path d="M8 29Q1 28 1 23Q10 27 32 22Q31 29 26 29Z" fill="#eaf1fa" />
        <path d="M15 0H38V13H26Q23 6 15 6Z" fill="#212224" opacity=".35" />
      </svg>
      <Temperature>33°C</Temperature>
    </Pinned>
    <Pinned $w={32} $gap={31}>
      <svg width="32" height="32" viewBox="0 0 32 32">
        <rect width="32" height="32" rx="7" fill="#000" />
        <g fill="none" strokeWidth="3.200">
          <path d="M16.500 6V20.500A4.500 4.500 0 1 1 12 16M16.500 7Q17.500 12 23 12.500" stroke="#25f4ee" transform="translate(-1 -.7)" />
          <path d="M16.500 6V20.500A4.500 4.500 0 1 1 12 16M16.500 7Q17.500 12 23 12.500" stroke="#fe2c55" transform="translate(1 .8)" />
          <path d="M16.500 6V20.500A4.500 4.500 0 1 1 12 16M16.500 7Q17.500 12 23 12.500" stroke="#fff" />
        </g>
      </svg>
    </Pinned>
    <Pinned $w={37} $gap={40}><WeChat s={37} /></Pinned>
    <Pinned $w={36} $gap={38}><Bird s={36} /></Pinned>
    <Pinned $w={27} $gap={44}>
      <svg width="27" height="36" viewBox="0 0 27 36">
        <path d="M0 0H20L27 7V36H0Z" fill="#efecda" />
        <path d="M20 0V7H27" fill="#cfcbb6" />
        <circle cx="13.500" cy="17" r="7" fill="#111" />
        <path d="M13 11Q18 14 16 20Q12 24 11 19Z" fill="#efecda" />
        <text x="7" y="33" fontSize="6" fontFamily="Open Sans, sans-serif" fill="#888">EPIC</text>
      </svg>
    </Pinned>
    <Pinned $w={33} $gap={46}><Hexagon w={33} /></Pinned>
    <Running $w={216} $gap={34} $pad={6}><Flomo s={30} bg="#eef0ee" r={5} />flomo</Running>
    <Pinned $w={32} $gap={34}>
      <svg width="32" height="21" viewBox="0 0 32 21"><path d="M0 0H9L14 21H10Z" fill="#00c8fb" /><path d="M10 0H20L16 21H12Z" fill="#1b1bf0" /><path d="M22 0H32L22 21H15Z" fill="#ff3667" /></svg>
    </Pinned>
    <Pinned $w={54} $gap={40}>
      <svg width="38" height="28" viewBox="0 0 38 28"><path d="M0 13L6 7L18 19L12 27Z" fill="#1f66b8" /><path d="M30 0L37 6L14 28L10 22Z" fill="#3d98e8" /></svg>
      <CountBadge>25</CountBadge>
    </Pinned>
    <Pinned $w={30} $gap={25}>
      <svg width="30" height="30" viewBox="0 0 30 30"><rect width="30" height="30" rx="6" fill="#f1f1f1" /><g transform="translate(2 2)"><MyMind s={26} /></g></svg>
    </Pinned>
    <Running $w={216} $gap={36}><Folder />屏幕截图</Running>
    <Running $w={216} $gap={24}><Folder />微信公众号文章搜...</Running>
    <Running $w={216} $gap={26} $pad={2}><Edge id="e1" />答疑 - 采集公众号...</Running>
    <Running $w={216} $gap={24} $pad={3}><Edge id="e2" />抖查查数据-抖直播...</Running>
    <Running $w={238} $gap={13} $pad={14} $active><Edge id="e3" />Mobile Broadban...</Running>
    <Pinned $w={36} $gap={21}>
      <svg width="36" height="36" viewBox="0 0 36 36"><rect width="36" height="36" rx="6" fill="#1d2bf2" /><path d="M12.500 8.500L16.500 7V28L12.500 27.500Z" fill="#fff" /><path d="M16.500 25L21.500 22.500L25 25L17.500 29L14 28.500Z" fill="#a9b0fb" /></svg>
    </Pinned>
    <Running $w={216} $gap={33} $pad={4}>
      <svg width="33" height="34" viewBox="0 0 33 34"><rect width="33" height="34" rx="4" fill="#40d07a" /><ellipse cx="12" cy="19.500" rx="5.500" ry="5" fill="#a5e9bf" /><ellipse cx="18" cy="15.500" rx="8" ry="6.800" fill="#fff" /><path d="M20 21L23.500 24L23 19Z" fill="#fff" /><circle cx="15.500" cy="14.500" r="1" fill="#40d07a" /><circle cx="20.500" cy="14.500" r="1" fill="#40d07a" /></svg>
      微信公众号文章搜...
    </Running>
    <Tray>
      <Slot $w={36}><Line s={18} c="#fff" sw={2.2}><path d="M2 17L12 7L22 17" /></Line></Slot>
      <Slot $w={36}>
        <svg width="24" height="24" viewBox="0 0 24 24"><path d="M7 0L11 4H17L22 0V12L24 24H5Q0 24 0 19Q1 18 2 20Q3 22 5 21L7 12Z" fill="#1b3a6e" /><circle cx="11" cy="9" r="1" fill="#cfe0ff" /><circle cx="17" cy="9" r="1" fill="#cfe0ff" /></svg>
      </Slot>
      <Slot $w={36}>
        <svg width="24" height="24" viewBox="0 0 24 24">
          <ellipse cx="10.500" cy="12" rx="8" ry="11.500" fill="#050505" />
          <ellipse cx="10.500" cy="17" rx="5.500" ry="6" fill="#fff" />
          <ellipse cx="8.500" cy="5.500" rx="1.600" ry="2.200" fill="#fff" /><ellipse cx="12.500" cy="5.500" rx="1.600" ry="2.200" fill="#fff" />
          <path d="M6 9Q10.500 12 15 9L10.500 8Z" fill="#f8a51b" />
          <path d="M3 12Q10 16 18 12V15Q11 18 6 15V19H3Z" fill="#e3232c" />
          <ellipse cx="5" cy="22.500" rx="4" ry="1.800" fill="#f4a21c" />
          <circle cx="17" cy="17" r="7" fill="#fb914c" /><path d="M13 15.500H21M13 18.500H21" stroke="#fff" strokeWidth="1.300" />
        </svg>
      </Slot>
      <Slot $w={36}><WeChat s={25} /></Slot>
      <Slot $w={36}><Line s={24} c="#fff" sw={1.5}><path d="M15 3H3Q1 3 1 5V17Q1 19 3 19H18M9 19V22.500M14 19V22.500M6 22.800H18M20.500 9V22.500M17.500 1H23.500V7Q23.500 9 20.500 9T17.500 7ZM19.500 1V4M21.500 1V4" /></Line></Slot>
      <Slot $w={36}><Line s={24} c="#fff" sw={1.5}><path d="M1 9H5L10 4V20L5 15H1ZM13.500 9Q15.500 12 13.500 15M16.500 6.500Q20 12 16.500 17.500" /><path d="M19.500 4Q25 12 19.500 20" stroke="#6b6b6b" /></Line></Slot>
      <Slot $w={41}>
        <svg width="34" height="34" viewBox="0 0 34 34">
          <circle cx="17" cy="17" r="17" fill="#18191b" />
          <path d="M17 1.500A15.500 15.500 0 0 1 32.500 17" fill="none" stroke="#22b8a4" strokeWidth="2.800" />
          <path d="M32.500 17A15.500 15.500 0 0 1 20 32.200" fill="none" stroke="#74bd45" strokeWidth="2.800" />
          <text x="17" y="23.500" textAnchor="middle" fontFamily="Open Sans, sans-serif" fontWeight="700" fontSize="18" letterSpacing="1" fill="#eee">46</text>
        </svg>
      </Slot>
      <Slot $w={56}>
        <svg width="25" height="24" viewBox="0 0 25 24"><path d="M2 3L21 0Q23 0 23.300 2L25 18Q25 20 23 20.500L6 24Q4 24 3.500 22L0 6Q0 4 2 3Z" fill="#f4551c" /><path d="M19 6Q8 4 7.500 8.500Q8 11 13 11.500Q19 12.500 17 16Q14 19 6.500 17" fill="none" stroke="#fff" strokeWidth="3.800" /></svg>
      </Slot>
      <Clock>11:33<br />2022/8/24</Clock>
      <Slot $w={56}><Line s={25} c="#fff" sw={1.7}><path d="M4 2H20Q22 2 22 4V17Q22 19 20 19H15.500L12 22.500L8.500 19H4Q2 19 2 17V4Q2 2 4 2Z" /></Line></Slot>
    </Tray>
  </>
);

const Flyout = () => (
  <TrayFlyout>
    <svg width="22" height="25" viewBox="0 0 22 25" fill="none" stroke="#fff" strokeWidth="1.600">
      <path d="M5 7V1H13V7M9 24H3Q1 24 1 22V9Q1 7 3 7H14Q16 7 16 9V10" />
      <circle cx="14.500" cy="17.500" r="7" fill="#fff" stroke="none" /><path d="M11 17.500L13.500 20L18 15" stroke="#505050" />
    </svg>
    <svg width="14" height="25" viewBox="0 0 14 25" fill="none" stroke="#fff" strokeWidth="1.600"><path d="M0 6L13 18L7 23.500V1.500L13 7L0 18.500" /></svg>
    <Shield kind="defender" />
    <svg width="24" height="24" viewBox="0 0 24 24"><circle cx="12" cy="12" r="12" fill="#bdbdc0" /><path d="M10 7L15 12L10 17" fill="none" stroke="#e6e6e6" strokeWidth="2.600" /></svg>
    <Feather s={24} bg="#5585fb" />
    <Shield kind="tencent" />
    <Shield kind="lenovo" />
    <svg width="24" height="24" viewBox="0 0 24 24"><circle cx="12" cy="12" r="12" fill="#fff" /><g transform="translate(3.500 4)"><Bird s={17} /></g><circle cx="20" cy="4" r="4" fill="#ef5350" /></svg>
    <svg width="24" height="22" viewBox="0 0 24 22"><rect width="24" height="22" rx="2" fill="#3bcd70" /><ellipse cx="13" cy="10" rx="6" ry="5" fill="#fff" /><ellipse cx="8" cy="13.500" rx="4" ry="3" fill="#b9ecc9" /></svg>
  </TrayFlyout>
);

const Menu = () => (
  <ContextMenu>
    <MenuItem>显示主界面</MenuItem>
    <MenuItem>创建桌面图标</MenuItem>
    <MenuItem>弹出最近一次公告</MenuItem>
    <MenuRule />
    <MenuItem>打赏作者</MenuItem>
    <MenuItem>分享软件</MenuItem>
    <MenuItem>访问官网</MenuItem>
    <MenuItem>更多软件</MenuItem>
    <MenuRule />
    <MenuItem>退出软件</MenuItem>
  </ContextMenu>
);

export default function App() {
  return (
    <Screen>
      <GlobalStyle />
      <Browser />
      <Viewport>
        <Scroller><RouterPage /></Scroller>
        <ScrollTrack><ScrollThumb /></ScrollTrack>
      </Viewport>
      <Taskbar><TaskbarIcons /></Taskbar>
      <Flyout />
      <Menu />
    </Screen>
  );
}
